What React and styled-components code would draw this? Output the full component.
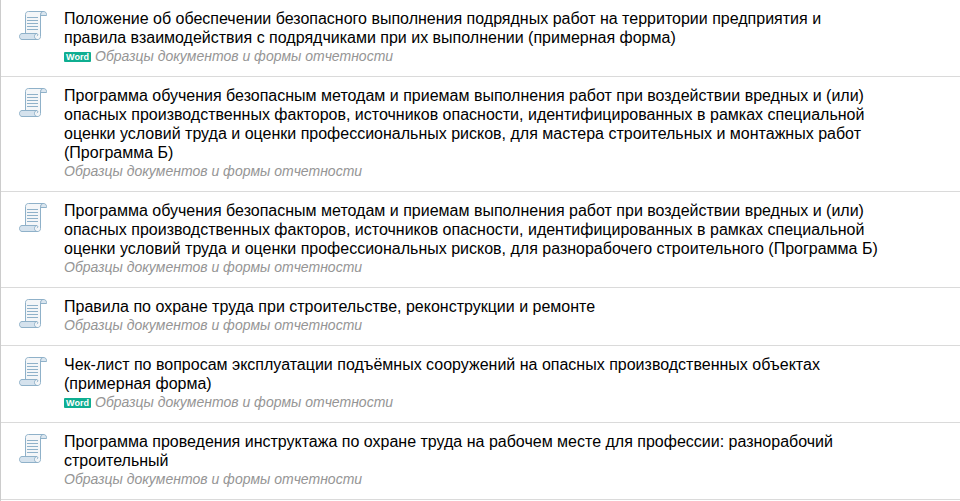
import React from "react";
import styled, { createGlobalStyle } from "styled-components";

const GlobalStyle = createGlobalStyle`
  body {
    margin: 0;
    background: #fff;
    font-family: "Liberation Sans", Arial, sans-serif;
  }
`;

const List = styled.ul`
  list-style: none;
  margin: 0;
  padding: 0;
  min-height: 100vh;
  border-left: 1px solid #ccc;
`;

const Item = styled.li`
  display: flex;
  align-items: flex-start;
  gap: 17px;
  padding: 9px 76px 10px 18px;
  border-bottom: 1px solid #dadada;
`;

const Icon = styled.svg`
  flex: none;
  width: 28px;
  height: 30px;
  margin-top: 2px;
`;

const Body = styled.div`
  flex: 1;
  min-width: 0;
`;

const Title = styled.a`
  display: block;
  color: #000;
  font-size: 16px;
  line-height: 19px;
  text-decoration: none;
`;

const Meta = styled.div`
  display: flex;
  align-items: center;
  gap: 4px;
  color: #959595;
  font-size: 14px;
  font-style: italic;
  line-height: 19px;
`;

const Badge = styled.span`
  width: 27px;
  height: 10px;
  border-radius: 1px;
  background: #0fae91;
  color: #fff;
  font-size: 9px;
  font-style: normal;
  font-weight: bold;
  line-height: 10px;
  text-align: center;
`;

const documents = [
  {
    title:
      "Положение об обеспечении безопасного выполнения подрядных работ на территории предприятия и правила взаимодействия с подрядчиками при их выполнении (примерная форма)",
    word: true,
  },
  {
    title:
      "Программа обучения безопасным методам и приемам выполнения работ при воздействии вредных и (или) опасных производственных факторов, источников опасности, идентифицированных в рамках специальной оценки условий труда и оценки профессиональных рисков, для мастера строительных и монтажных работ (Программа Б)",
  },
  {
    title:
      "Программа обучения безопасным методам и приемам выполнения работ при воздействии вредных и (или) опасных производственных факторов, источников опасности, идентифицированных в рамках специальной оценки условий труда и оценки профессиональных рисков, для разнорабочего строительного (Программа Б)",
  },
  { title: "Правила по охране труда при строительстве, реконструкции и ремонте" },
  {
    title:
      "Чек-лист по вопросам эксплуатации подъёмных сооружений на опасных производственных объектах (примерная форма)",
    word: true,
  },
  {
    title:
      "Программа проведения инструктажа по охране труда на рабочем месте для профессии: разнорабочий строительный",
  },
];

function ScrollIcon() {
  return (
    <Icon viewBox="0 0 28 30" fill="none" stroke="#8fb1c9" strokeLinejoin="round" aria-hidden="true">
      <path d="M21.5 4.5H27.5V3.5C27.5 1.7 26.3.5 24.5.5H22Z" fill="#dbe6ef" />
      <path d="M6.5 23V3.5C6.5 1.7 7.7.5 9.5.5H24.5C22.7.5 21.5 1.7 21.5 3.5V25.5C21.5 27.5 20.3 28.5 18.5 28.5H6.5Z" fill="#f4f6f8" />
      <path d="M18 22.5H3C1.5 22.5.5 23.8.5 25.5S1.5 28.5 3 28.5H18.5C16.9 28.5 15.5 27.3 15.5 25.5S16.5 22.5 18 22.5Z" fill="#d5e2ed" />
      <path d="M18 22.5C19 22.9 19.3 24.5 17.8 25" />
      <path d="M8 6.5H19M8 9.5H19M8 12.5H19M8 15.5H19M8 18.5H19" />
    </Icon>
  );
}

export default function App() {
  return (
    <>
      <GlobalStyle />
      <List>
        {documents.map(({ title, word }) => (
          <Item key={title}>
            <ScrollIcon />
            <Body>
              <Title href="#">{title}</Title>
              <Meta>
                {word && <Badge>Word</Badge>}
                <span>Образцы документов и формы отчетности</span>
              </Meta>
            </Body>
          </Item>
        ))}
      </List>
    </>
  );
}
